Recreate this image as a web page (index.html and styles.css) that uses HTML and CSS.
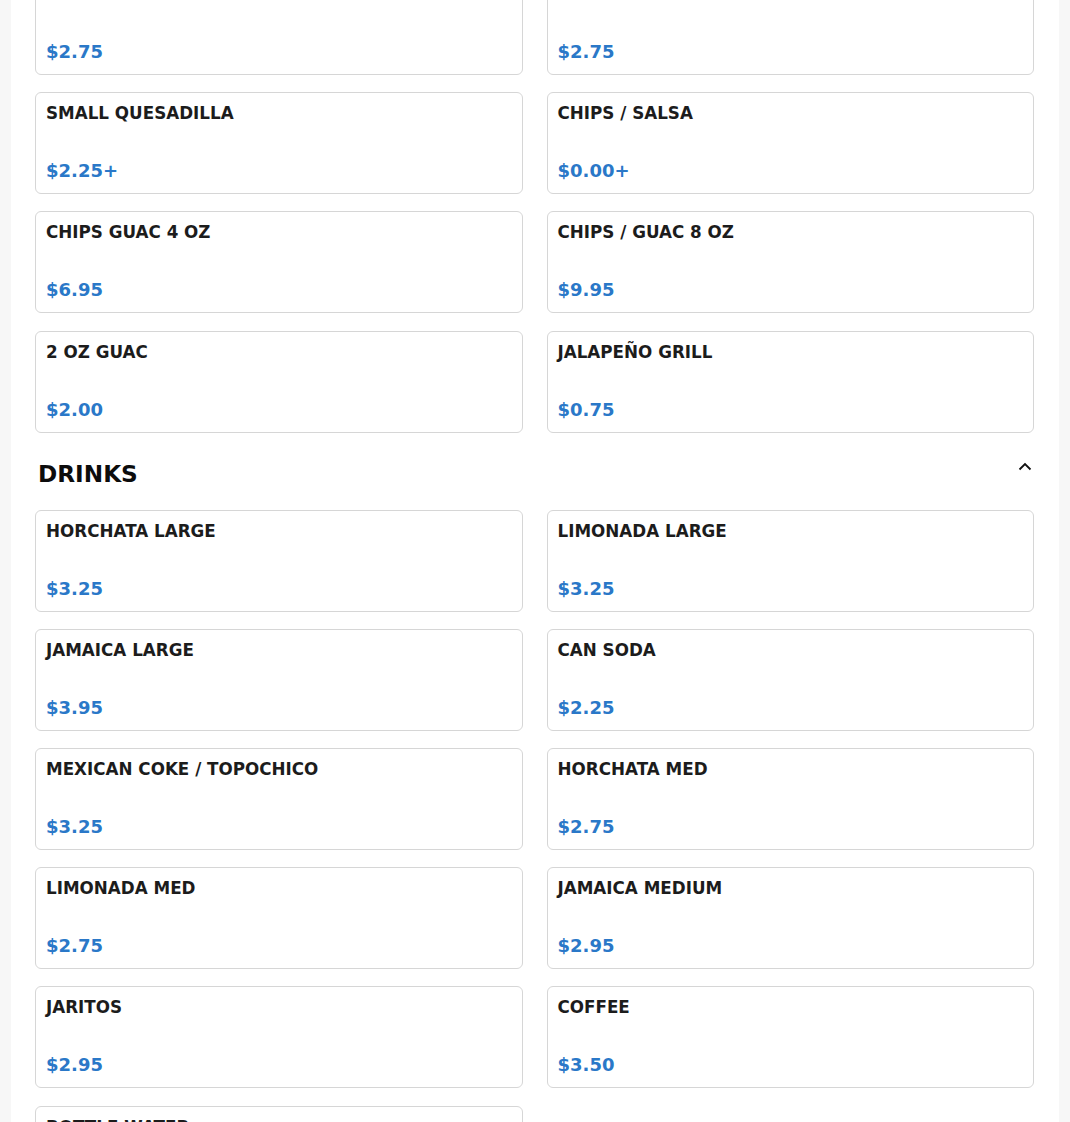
FILE: index.html
```html
<!DOCTYPE html>
<html lang="en">
<head>
<meta charset="utf-8">
<title>Menu</title>
<link rel="stylesheet" href="styles.css">
</head>
<body>
<main class="panel">
  <section class="section section-scrolled">
    <div class="grid">
      <div class="card"><div class="name">RICE</div><div class="price">$2.75</div></div>
      <div class="card"><div class="name">BEANS</div><div class="price">$2.75</div></div>
      <div class="card"><div class="name">SMALL QUESADILLA</div><div class="price">$2.25+</div></div>
      <div class="card"><div class="name">CHIPS / SALSA</div><div class="price">$0.00+</div></div>
      <div class="card"><div class="name">CHIPS GUAC 4 OZ</div><div class="price">$6.95</div></div>
      <div class="card"><div class="name">CHIPS / GUAC 8 OZ</div><div class="price">$9.95</div></div>
      <div class="card"><div class="name">2 OZ GUAC</div><div class="price">$2.00</div></div>
      <div class="card"><div class="name">JALAPEÑO GRILL</div><div class="price">$0.75</div></div>
    </div>
  </section>
  <section class="section">
    <div class="section-head">
      <h2 class="section-title">DRINKS</h2>
      <svg class="chevron" width="14" height="9" viewBox="0 0 14 9" aria-hidden="true"><path d="M1.5 7.5 L7 2 L12.5 7.5" fill="none" stroke="#111" stroke-width="1.8"/></svg>
    </div>
    <div class="grid">
      <div class="card"><div class="name">HORCHATA LARGE</div><div class="price">$3.25</div></div>
      <div class="card"><div class="name">LIMONADA LARGE</div><div class="price">$3.25</div></div>
      <div class="card"><div class="name">JAMAICA LARGE</div><div class="price">$3.95</div></div>
      <div class="card"><div class="name">CAN SODA</div><div class="price">$2.25</div></div>
      <div class="card"><div class="name">MEXICAN COKE / TOPOCHICO</div><div class="price">$3.25</div></div>
      <div class="card"><div class="name">HORCHATA MED</div><div class="price">$2.75</div></div>
      <div class="card"><div class="name">LIMONADA MED</div><div class="price">$2.75</div></div>
      <div class="card"><div class="name">JAMAICA MEDIUM</div><div class="price">$2.95</div></div>
      <div class="card"><div class="name">JARITOS</div><div class="price">$2.95</div></div>
      <div class="card"><div class="name">COFFEE</div><div class="price">$3.50</div></div>
      <div class="card"><div class="name">BOTTLE WATER</div><div class="price">$1.50</div></div>
    </div>
  </section>
</main>
</body>
</html>
```
FILE: styles.css
```css
html, body {
  margin: 0;
  padding: 0;
  background: #f7f7f7;
  font-family: "DejaVu Sans", Verdana, sans-serif;
  overflow: hidden;
}
.panel {
  margin: 0 11px;
  background: #ffffff;
  padding: 0 25px 40px 24px;
  min-height: 1200px;
}
.section-scrolled {
  margin-top: -27px;
}
.grid {
  display: grid;
  grid-template-columns: 1fr 1fr;
  column-gap: 24px;
  row-gap: 17.2px;
}
.card {
  box-sizing: border-box;
  height: 102px;
  border: 1px solid #d6d6d6;
  border-radius: 6px;
  padding: 10px 10px 12px;
  display: flex;
  flex-direction: column;
  justify-content: space-between;
  background: #fff;
}
.name {
  font-size: 16.75px;
  font-weight: bold;
  color: #1c1c1c;
}
.price {
  font-size: 18px;
  font-weight: bold;
  color: #2a78c8;
}
.section-head {
  display: flex;
  justify-content: space-between;
  align-items: center;
  margin: 27px 0 23px;
  padding: 0 2px 0 3px;
}
.section-title {
  margin: 0;
  font-size: 23.2px;
  font-weight: bold;
  color: #0c0c0c;
}
.chevron {
  display: block;
  margin-top: -14px;
}
```
